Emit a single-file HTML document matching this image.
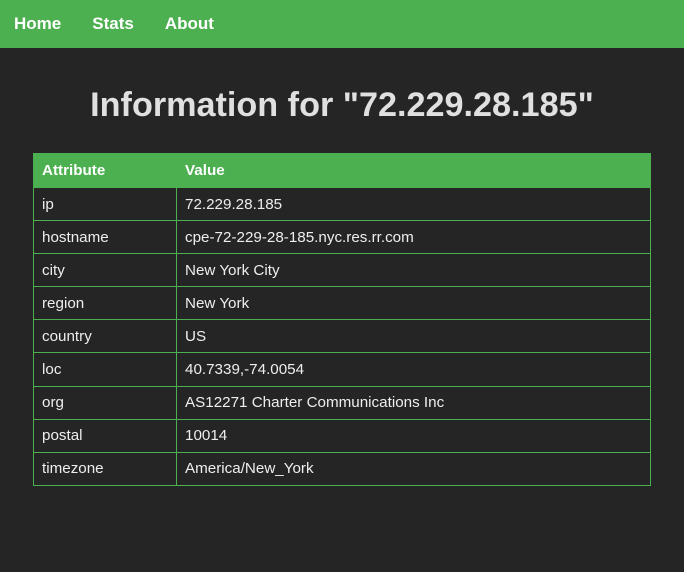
<!DOCTYPE html>
<html><head><style>
body{margin:0;background:#252525;font-family:"Liberation Sans",sans-serif;width:684px;height:572px;overflow:hidden}
.nav{height:48px;background:#4caf50;display:flex;align-items:center}
.nav a{color:#fff;font-weight:bold;font-size:17px;text-decoration:none;margin-left:14px;margin-right:17px}
h1{color:#e0e0e0;text-align:center;font-size:34.2px;margin:37px 0 0;line-height:40px}
table{position:absolute;left:33px;top:153px;width:618px;border-collapse:collapse;font-size:15.2px;color:#eee}
th{background:#4caf50;color:#fff;text-align:left;height:33px;padding:0 8px;border:1px solid #4caf50;font-size:15.2px}
td{height:32.1px;padding:0 8px;border:1px solid #4caf50;border-top:1px solid #888}
td:first-child{width:126px}
</style></head><body>
<div class="nav"><a href="#">Home</a><a href="#">Stats</a><a href="#">About</a></div>
<h1>Information for "72.229.28.185"</h1>
<table>
<tr><th>Attribute</th><th>Value</th></tr>
<tr><td>ip</td><td>72.229.28.185</td></tr>
<tr><td>hostname</td><td>cpe-72-229-28-185.nyc.res.rr.com</td></tr>
<tr><td>city</td><td>New York City</td></tr>
<tr><td>region</td><td>New York</td></tr>
<tr><td>country</td><td>US</td></tr>
<tr><td>loc</td><td>40.7339,-74.0054</td></tr>
<tr><td>org</td><td>AS12271 Charter Communications Inc</td></tr>
<tr><td>postal</td><td>10014</td></tr>
<tr><td>timezone</td><td>America/New_York</td></tr>
</table>
</body></html>
